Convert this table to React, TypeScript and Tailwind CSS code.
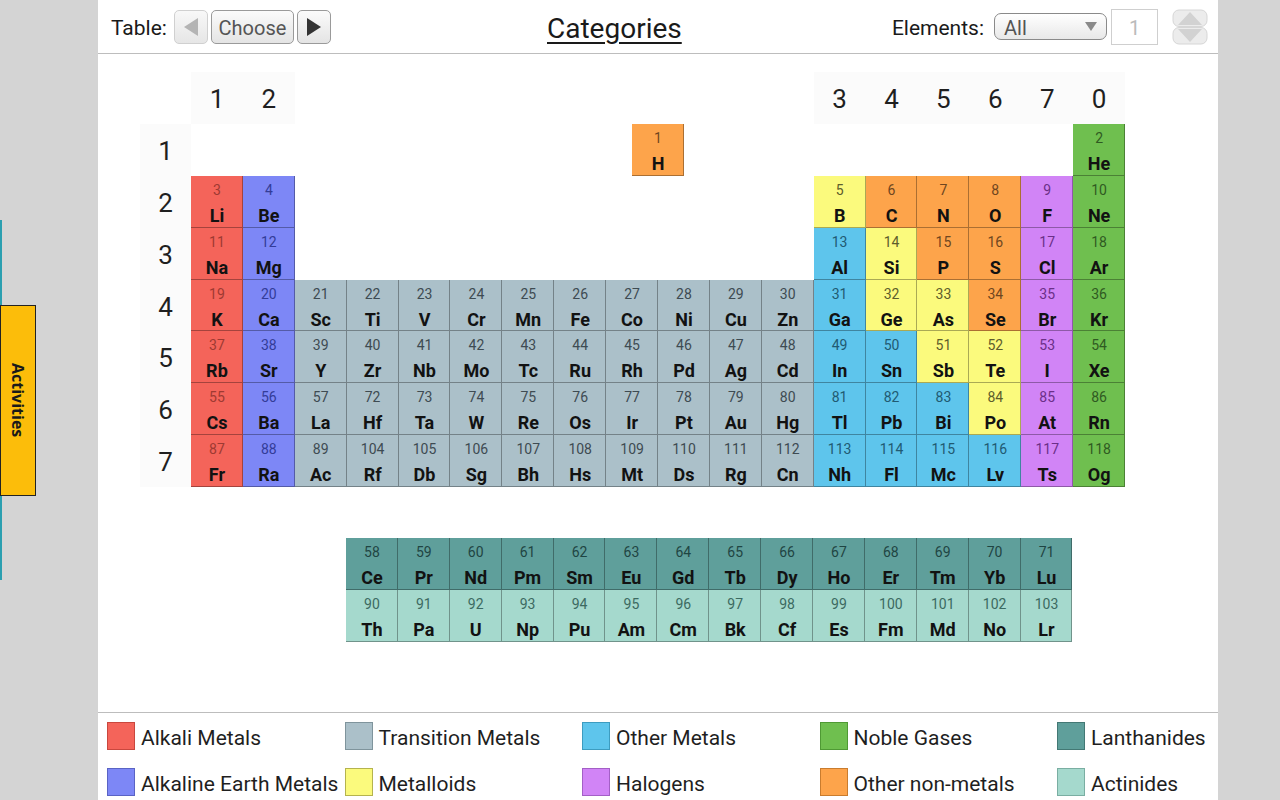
import React from 'react'

type Cat = 'alk' | 'ear' | 'tra' | 'oth' | 'met' | 'non' | 'hal' | 'nob' | 'lan' | 'act'

const CATS: Record<Cat, { bg: string; num: string; label: string; sw: string }> = {
  alk: { bg: 'bg-[#f4645a]', num: 'text-[#9e3a32]', label: 'Alkali Metals', sw: 'border-[#c9473e]' },
  ear: { bg: 'bg-[#7d87f6]', num: 'text-[#333c98]', label: 'Alkaline Earth Metals', sw: 'border-[#5a63c4]' },
  tra: { bg: 'bg-[#abc0c9]', num: 'text-[#3e4b52]', label: 'Transition Metals', sw: 'border-[#7f949c]' },
  oth: { bg: 'bg-[#5ec5ec]', num: 'text-[#215a72]', label: 'Other Metals', sw: 'border-[#3d9cc0]' },
  met: { bg: 'bg-[#fbfa7d]', num: 'text-[#5e5d2c]', label: 'Metalloids', sw: 'border-[#b5b34e]' },
  non: { bg: 'bg-[#fda44b]', num: 'text-[#6f4620]', label: 'Other non-metals', sw: 'border-[#c97c2e]' },
  hal: { bg: 'bg-[#d184f6]', num: 'text-[#6b2f88]', label: 'Halogens', sw: 'border-[#a35fc6]' },
  nob: { bg: 'bg-[#6fbf4f]', num: 'text-[#2f5a22]', label: 'Noble Gases', sw: 'border-[#4f9934]' },
  lan: { bg: 'bg-[#5f9f9b]', num: 'text-[#1f4543]', label: 'Lanthanides', sw: 'border-[#437874]' },
  act: { bg: 'bg-[#a5d9cd]', num: 'text-[#3c6a61]', label: 'Actinides', sw: 'border-[#7aaea2]' },
}

type El = { n: number; s: string; c: Cat }

// categories of groups 13-18 for each period
const P_BLOCK: Record<number, Cat[]> = {
  2: ['met', 'non', 'non', 'non', 'hal', 'nob'],
  3: ['oth', 'met', 'non', 'non', 'hal', 'nob'],
  4: ['oth', 'met', 'met', 'non', 'hal', 'nob'],
  5: ['oth', 'oth', 'met', 'met', 'hal', 'nob'],
  6: ['oth', 'oth', 'oth', 'met', 'hal', 'nob'],
  7: ['oth', 'oth', 'oth', 'oth', 'hal', 'nob'],
}

const SYMBOLS: Record<number, string> = {
  2: 'Li Be _ _ _ _ _ _ _ _ _ _ B C N O F Ne',
  3: 'Na Mg _ _ _ _ _ _ _ _ _ _ Al Si P S Cl Ar',
  4: 'K Ca Sc Ti V Cr Mn Fe Co Ni Cu Zn Ga Ge As Se Br Kr',
  5: 'Rb Sr Y Zr Nb Mo Tc Ru Rh Pd Ag Cd In Sn Sb Te I Xe',
  6: 'Cs Ba La Hf Ta W Re Os Ir Pt Au Hg Tl Pb Bi Po At Rn',
  7: 'Fr Ra Ac Rf Db Sg Bh Hs Mt Ds Rg Cn Nh Fl Mc Lv Ts Og',
}

const NUMBERS: Record<number, number[]> = {
  2: [3, 4, 0, 0, 0, 0, 0, 0, 0, 0, 0, 0, 5, 6, 7, 8, 9, 10],
  3: [11, 12, 0, 0, 0, 0, 0, 0, 0, 0, 0, 0, 13, 14, 15, 16, 17, 18],
  4: Array.from({ length: 18 }, (_, i) => 19 + i),
  5: Array.from({ length: 18 }, (_, i) => 37 + i),
  6: [55, 56, 57, ...Array.from({ length: 15 }, (_, i) => 72 + i)],
  7: [87, 88, 89, ...Array.from({ length: 15 }, (_, i) => 104 + i)],
}

function periodRow(p: number): (El | null)[] {
  const syms = SYMBOLS[p].split(' ')
  return syms.map((s, i) => {
    if (s === '_') return null
    const c: Cat = i === 0 ? 'alk' : i === 1 ? 'ear' : i < 12 ? 'tra' : P_BLOCK[p][i - 12]
    return { n: NUMBERS[p][i], s, c }
  })
}

const LANTH = 'Ce Pr Nd Pm Sm Eu Gd Tb Dy Ho Er Tm Yb Lu'.split(' ').map((s, i) => ({ n: 58 + i, s, c: 'lan' as Cat }))
const ACTIN = 'Th Pa U Np Pu Am Cm Bk Cf Es Fm Md No Lr'.split(' ').map((s, i) => ({ n: 90 + i, s, c: 'act' as Cat }))

const LEGEND: Cat[] = ['alk', 'tra', 'oth', 'nob', 'lan', 'ear', 'met', 'hal', 'non', 'act']

function Cell({ el }: { el: El }) {
  const c = CATS[el.c]
  return (
    <div className={`${c.bg} w-[51.9px] h-[51.9px] flex flex-col items-center shadow-[inset_-1px_-1px_0_rgba(0,0,0,0.32)]`}>
      <span className={`${c.num} text-[14px] leading-none mt-[7px]`}>{el.n}</span>
      <span className="text-[18px] font-bold leading-none mt-[10px] text-[#121212]">{el.s}</span>
    </div>
  )
}

function Arrow({ dir, color }: { dir: 'left' | 'right'; color: string }) {
  return (
    <svg width="16" height="20" viewBox="0 0 16 20">
      {dir === 'left' ? <polygon points="15,1 15,19 1,10" fill={color} /> : <polygon points="1,1 1,19 15,10" fill={color} />}
    </svg>
  )
}

function Header() {
  return (
    <div className="h-[54px] border-b border-[#bdbdbd] flex items-center pl-[13px] pr-[10px] text-[21px] text-[#1a1a1a]">
      <div className="w-[436px] flex items-center">
        <span className="pt-[4px]">Table:</span>
        <button className="ml-[7px] w-[34px] h-[34px] rounded-[5px] border border-[#d0d0d0] bg-gradient-to-b from-[#f8f8f8] to-[#e6e6e6] flex items-center justify-center">
          <Arrow dir="left" color="#b4b4b4" />
        </button>
        <button className="ml-[3px] w-[83px] h-[34px] pt-[2px] rounded-[5px] border border-[#9a9a9a] bg-gradient-to-b from-[#fbfbfb] to-[#e4e4e4] text-[#555] text-[20px]">
          Choose
        </button>
        <button className="ml-[3px] w-[34px] h-[34px] rounded-[5px] border border-[#9a9a9a] bg-gradient-to-b from-[#fbfbfb] to-[#e4e4e4] flex items-center justify-center">
          <Arrow dir="right" color="#333" />
        </button>
      </div>
      <span className="text-[28px] leading-none pt-[4px] underline underline-offset-[4px] decoration-[1.5px]">Categories</span>
      <div className="ml-auto flex items-center">
        <span className="pt-[4px]">Elements:</span>
        <div className="ml-[10px] w-[113px] h-[27px] rounded-[7px] border border-[#8a8a8a] bg-gradient-to-b from-[#ffffff] to-[#e8e8e8] flex items-center pl-[9px] pr-[9px] text-[#555] text-[20px]">
          <span className="flex-1 leading-none pt-[3px]">All</span>
          <svg width="12" height="9" viewBox="0 0 12 9">
            <polygon points="0,0 12,0 6,9" fill="#8a8a8a" />
          </svg>
        </div>
        <div className="ml-[4px] w-[47px] h-[36px] pt-[2px] border border-[#cfcfcf] flex items-center justify-center text-[#bbb] text-[20px]">1</div>
        <svg className="ml-[14px]" width="36" height="36" viewBox="0 0 36 36">
          <rect x="1" y="1" width="34" height="16.5" rx="6" fill="#ececec" stroke="#d6d6d6" />
          <rect x="1" y="18.5" width="34" height="16.5" rx="6" fill="#ececec" stroke="#d6d6d6" />
          <polygon points="18,3 30,16 6,16" fill="#d2d2d2" />
          <polygon points="18,33 30,20 6,20" fill="#d2d2d2" />
        </svg>
      </div>
    </div>
  )
}

function Table() {
  const empty = (k: string) => <div key={k} className="h-[51.9px]" />
  const groupLabel = (t: string, k: string) => (
    <div key={k} className="h-[51.9px] pt-[3px] bg-[#fbfbfb] flex items-center justify-center text-[26px] text-[#1f1f1f]">
      {t}
    </div>
  )
  const rowLabel = (t: number) => (
    <div key={`r${t}`} className="h-[51.9px] pt-[3px] bg-[#fbfbfb] flex items-center justify-center text-[26px] text-[#1f1f1f]">
      {t}
    </div>
  )

  const cells: React.ReactNode[] = []
  // header row
  cells.push(empty('h0'))
  cells.push(groupLabel('1', 'g1'), groupLabel('2', 'g2'))
  for (let i = 3; i <= 12; i++) cells.push(empty(`hg${i}`))
  ;['3', '4', '5', '6', '7', '0'].forEach((g) => cells.push(groupLabel(g, `gg${g}`)))

  // period 1: H sits between groups 9 and 10
  cells.push(rowLabel(1))
  for (let i = 1; i <= 8; i++) cells.push(empty(`p1a${i}`))
  cells.push(
    <div key="H" className="col-span-2 flex justify-center">
      <Cell el={{ n: 1, s: 'H', c: 'non' }} />
    </div>
  )
  for (let i = 11; i <= 17; i++) cells.push(empty(`p1b${i}`))
  cells.push(<Cell key="He" el={{ n: 2, s: 'He', c: 'nob' }} />)

  for (let p = 2; p <= 7; p++) {
    cells.push(rowLabel(p))
    periodRow(p).forEach((el, i) => cells.push(el ? <Cell key={el.s} el={el} /> : empty(`p${p}e${i}`)))
  }

  return (
    <div className="pt-[18px] pl-[42px]">
      <div className="grid grid-cols-[51px_repeat(18,51.9px)]">{cells}</div>
      <div className="mt-[51px] ml-[206px] flex flex-col">
        <div className="flex">
          {LANTH.map((el) => (
            <Cell key={el.s} el={el} />
          ))}
        </div>
        <div className="flex">
          {ACTIN.map((el) => (
            <Cell key={el.s} el={el} />
          ))}
        </div>
      </div>
    </div>
  )
}

function Legend() {
  return (
    <div className="h-[88px] border-t border-[#bdbdbd] pl-[9px] pt-[9px] grid grid-cols-[repeat(5,237.5px)] grid-rows-[46px_46px]">
      {LEGEND.map((k) => (
        <div key={k} className="flex items-start gap-[6px]">
          <span className={`w-[28px] h-[28px] border ${CATS[k].bg} ${CATS[k].sw}`} />
          <span className="text-[21px] leading-[28px] pt-[2px] text-[#1f1f1f] whitespace-nowrap">{CATS[k].label}</span>
        </div>
      ))}
    </div>
  )
}

export default function App() {
  return (
    <div className="w-[1280px] h-[800px] bg-[#d4d4d4] flex overflow-hidden [font-family:Roboto,sans-serif]">
      {/* left rail with Activities tab */}
      <div className="w-[98px] pt-[220px]">
        <div className="h-[360px] border-l-[2px] border-[#2b9fb0] pt-[85px]">
          <div className="-ml-[2px] w-[36px] h-[191px] bg-[#fcbd0a] border border-[#222] flex items-center justify-center">
            <span className="[writing-mode:vertical-rl] font-bold text-[16px] text-[#1a1a1a] [font-family:'Open_Sans',sans-serif]">
              Activities
            </span>
          </div>
        </div>
      </div>

      <div className="w-[1120px] bg-white flex flex-col">
        <Header />
        <div className="flex-1">
          <Table />
        </div>
        <Legend />
      </div>
    </div>
  )
}
